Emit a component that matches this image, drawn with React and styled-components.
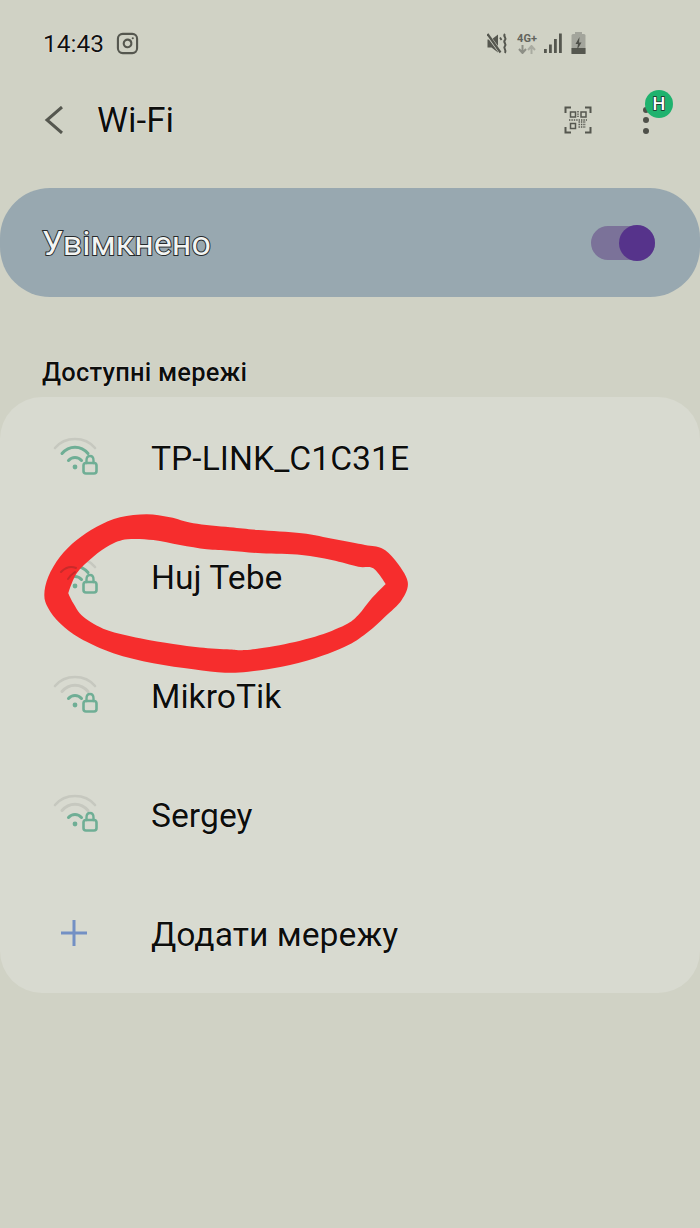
import React from 'react';
import styled, { createGlobalStyle } from 'styled-components';
import { Instagram } from 'lucide-react';

const GlobalStyle = createGlobalStyle`
  html, body {
    margin: 0;
    padding: 0;
    background: #d0d2c5;
    font-family: Roboto, "Noto Sans", sans-serif;
  }
`;

const halo = '0 0 1px rgba(255, 255, 255, 0.9), 0 0 1px rgba(255, 255, 255, 0.7)';

const Screen = styled.div`
  position: relative;
  width: 700px;
  height: 1228px;
  overflow: hidden;
  background: #d0d2c5;
  color: #0d0e0c;
`;

const StatusBar = styled.div`
  display: flex;
  align-items: center;
  justify-content: space-between;
  height: 86px;
  padding: 0 114px 0 43px;
`;

const StatusLeft = styled.div`
  display: flex;
  align-items: center;
  gap: 12px;
  color: #55574f;
`;

const Time = styled.span`
  font-size: 24.5px;
  color: #111;
  text-shadow: ${halo};
`;

const StatusRight = styled.div`
  display: flex;
  align-items: center;
  color: #55574f;
`;

const NetType = styled.div`
  display: flex;
  flex-direction: column;
  align-items: center;
  width: 22px;
  margin: 0 6px 0 8px;
  font-size: 11px;
  line-height: 12px;
  font-weight: 700;
  color: #62645c;
`;

const BatterySlot = styled.span`
  display: flex;
  margin-left: 9px;
`;

const Header = styled.header`
  display: flex;
  align-items: center;
  height: 68px;
  padding: 0 42px 0 44px;
`;

const BackButton = styled.div`
  display: flex;
  width: 53px;
`;

const Title = styled.h1`
  flex: 1;
  margin: 0;
  font-size: 35px;
  font-weight: 400;
  text-shadow: ${halo};
`;

const ToolIcon = styled.div`
  display: flex;
  margin-right: 51px;
`;

const MoreButton = styled.div`
  position: relative;
  display: flex;
  flex-direction: column;
  gap: 4.5px;
  margin-right: 9px;
`;

const Dot = styled.span`
  width: 6px;
  height: 6px;
  border-radius: 50%;
  background: #4e5049;
`;

const Badge = styled.span`
  position: absolute;
  top: -17px;
  left: -1px;
  width: 28px;
  height: 28px;
  margin-left: 3px;
  border-radius: 50%;
  background: #1fb26e;
  color: #fff;
  font-size: 18px;
  font-weight: 500;
  line-height: 28px;
  text-align: center;
  -webkit-text-stroke: 1.5px #1c2a24;
  paint-order: stroke fill;
`;

const ToggleCard = styled.section`
  display: flex;
  align-items: center;
  justify-content: space-between;
  height: 109px;
  margin-top: 34px;
  padding: 0 45px 0 42px;
  border-radius: 50px;
  background: #98a8b0;
`;

const ToggleLabel = styled.span`
  font-size: 34px;
  color: #f3f5f3;
  -webkit-text-stroke: 2px #262a2c;
  paint-order: stroke fill;
`;

const Track = styled.div`
  position: relative;
  width: 64px;
  height: 34px;
  border-radius: 17px;
  background: #7b7299;
`;

const Knob = styled.span`
  position: absolute;
  top: -1px;
  right: 0;
  width: 36px;
  height: 36px;
  border-radius: 50%;
  background: #56338b;
`;

const SectionLabel = styled.h2`
  height: 30px;
  margin: 60px 0 10px;
  padding-left: 42px;
  font-size: 25.5px;
  line-height: 30px;
  font-weight: 500;
  letter-spacing: 0.2px;
  text-shadow: ${halo};
`;

const List = styled.section`
  height: 596px;
  border-radius: 42px;
  background: #d8dad0;
`;

const Row = styled.div`
  display: flex;
  align-items: center;
  height: 119.2px;
`;

const RowIcon = styled.div`
  display: flex;
  width: 151px;
  padding-left: ${(p) => (p.$plus ? '60px' : '52px')};
  box-sizing: border-box;
`;

const RowName = styled.span`
  padding-top: 3px;
  font-size: 33.7px;
  color: #0d0e0c;
  text-shadow: ${halo};
`;

const Scribble = styled.svg`
  position: absolute;
  top: 500px;
  left: 30px;
  pointer-events: none;
`;

const green = '#6fae95';
const grey = '#c6c8bf';

// marker stroke traced from the picture, page coordinates; third value marks a sharp corner
const scribbleOuter = [
  [44.3, 595], [48.3, 576.7], [60, 556.7], [76.7, 540], [96.7, 526.7], [120, 517.3], [146.7, 514.3],
  [170, 517.3], [193.3, 523.3], [230, 527.3], [258.3, 530], [301.7, 533.3], [335, 539.3], [365, 545],
  [381.7, 548.3], [395, 560], [407.7, 581.7], [401.7, 600], [385, 616.7], [368.3, 631.7], [348.3, 645],
  [315, 658.3], [281.7, 666.7], [248.3, 671.7], [225, 672.7], [193.3, 669.3], [153.3, 663.3],
  [113.3, 653.3], [80, 638.3], [60, 623.3], [48.3, 608.3],
];
const scribbleInner = [
  [68.3, 593.3, true], [76.7, 573.3], [93.3, 556.7], [110, 545], [127.3, 539.3], [153.3, 540], [180, 545],
  [206.7, 549.3], [230, 550.7], [261.7, 553.3], [301.7, 555], [331.7, 560], [358.3, 566.7], [373.3, 568.3],
  [385.7, 584, true], [371.7, 598.3], [358.3, 615], [345, 625], [315, 636.7], [275, 646], [245, 650],
  [230, 649.5], [200, 647.5], [173.3, 644], [140, 638.3], [106.7, 630], [83.3, 616.7], [73.3, 603.3],
];

function smoothClosed(points) {
  const n = points.length;
  const tangent = (i) => {
    if (points[i][2]) return [0, 0];
    const prev = points[(i - 1 + n) % n];
    const next = points[(i + 1) % n];
    return [(next[0] - prev[0]) / 6, (next[1] - prev[1]) / 6];
  };
  let d = `M${points[0][0]} ${points[0][1]}`;
  points.forEach((p, i) => {
    const j = (i + 1) % n;
    const next = points[j];
    const t1 = tangent(i);
    const t2 = tangent(j);
    d += ` C${p[0] + t1[0]} ${p[1] + t1[1]} ${next[0] - t2[0]} ${next[1] - t2[1]} ${next[0]} ${next[1]}`;
  });
  return d + ' Z';
}

function WifiLock({ level }) {
  return (
    <svg width="46" height="40" viewBox="0 0 46 40" fill="none" strokeLinecap="round">
      <path d="M3 11 C13 -1 33 -1 43 11" stroke={grey} strokeWidth="2.6" />
      <path d="M10 16.5 C17 8 29 8 36 16.5" stroke={level > 1 ? green : grey} strokeWidth="3" />
      <path d="M16.5 23.5 C20 19.5 26 19.5 29.5 23.5" stroke={green} strokeWidth="3" />
      <circle cx="23" cy="30" r="2.4" fill={green} />
      <path d="M34.5 26 V23.5 C34.5 17.5 41.5 17.5 41.5 23.5 V26" stroke={green} strokeWidth="2.4" />
      <rect x="31.5" y="26" width="13" height="10.5" rx="2.5" stroke={green} strokeWidth="2.6" />
    </svg>
  );
}

function MuteIcon() {
  return (
    <svg width="21" height="21" viewBox="0 0 21 21" fill="none">
      <path d="M0.5 6.5 H4.5 L11 1.5 V19.5 L4.5 14.5 H0.5 Z" fill="currentColor" />
      <path d="M0 1 L14 20" stroke="#d0d2c5" strokeWidth="3.6" />
      <path d="M0.5 1 L13.5 19.5" stroke="currentColor" strokeWidth="2.2" />
      <path d="M13 4.5 L14.5 7" stroke="currentColor" strokeWidth="1.8" />
      <path
        d="M18 1 C15.5 3.5 20 4.5 18 7 C15.5 9.5 20 10.5 18 13 C15.5 15.5 20 16.5 18 20"
        stroke="currentColor"
        strokeWidth="2"
      />
    </svg>
  );
}

function DataArrows() {
  return (
    <svg width="18" height="9" viewBox="0 0 18 9" fill="none">
      <path d="M4.5 0 V7 M1 4 L4.5 8 L8 4" stroke="#8d8f86" strokeWidth="2" />
      <path d="M13.5 9 V2 M10 5 L13.5 1 L17 5" stroke="#a9aba1" strokeWidth="2" />
    </svg>
  );
}

function SignalIcon() {
  return (
    <svg width="18" height="21" viewBox="0 0 18 21" fill="currentColor">
      <rect x="0" y="16" width="2.8" height="4" />
      <rect x="5" y="11.5" width="2.8" height="8.5" />
      <rect x="10" y="6" width="2.8" height="14" />
      <rect x="15" y="0.5" width="2.8" height="19.5" />
    </svg>
  );
}

function BatteryIcon() {
  return (
    <svg width="15" height="22" viewBox="0 0 15 22">
      <rect x="4" y="0" width="7" height="3" fill="#a3a59c" />
      <rect x="0.5" y="2" width="14" height="20" rx="1.5" fill="#a3a59c" />
      <rect x="0.5" y="16" width="14" height="6" fill="#55574f" />
      <path d="M8.5 5 L4.5 12 H7 L6 18 L10.5 10.5 H8 Z" fill="#4e5049" />
    </svg>
  );
}

function QrIcon() {
  return (
    <svg width="28" height="28" viewBox="0 0 28 28" fill="none" stroke="#55574f">
      <path d="M1.5 7 V1.5 H7 M21 1.5 H26.5 V7 M26.5 21 V26.5 H21 M7 26.5 H1.5 V21" strokeWidth="2" />
      <rect x="6.5" y="6" width="5" height="5" strokeWidth="1.5" />
      <rect x="17" y="6" width="5" height="5" strokeWidth="1.5" />
      <rect x="6.5" y="17.5" width="5" height="5" strokeWidth="1.5" />
      <path d="M14 5 V11 M5 14 H23 M14.5 16 H22 M14.5 18.5 H22 M14.5 21 H22" strokeWidth="1.5" strokeDasharray="1.4 1" />
    </svg>
  );
}

const networks = [
  { name: 'TP-LINK_C1C31E', level: 2 },
  { name: 'Huj Tebe', level: 2 },
  { name: 'MikroTik', level: 1 },
  { name: 'Sergey', level: 1 },
];

export default function App() {
  return (
    <Screen>
      <GlobalStyle />
      <StatusBar>
        <StatusLeft>
          <Time>14:43</Time>
          <Instagram size={23} strokeWidth={2.2} />
        </StatusLeft>
        <StatusRight>
          <MuteIcon />
          <NetType>
            4G+
            <DataArrows />
          </NetType>
          <SignalIcon />
          <BatterySlot>
            <BatteryIcon />
          </BatterySlot>
        </StatusRight>
      </StatusBar>

      <Header>
        <BackButton>
          <svg width="20" height="28" viewBox="0 0 20 28" fill="none" stroke="#55574f" strokeWidth="3">
            <path d="M18 1 L3 14 L18 27" />
          </svg>
        </BackButton>
        <Title>Wi-Fi</Title>
        <ToolIcon>
          <QrIcon />
        </ToolIcon>
        <MoreButton>
          <Dot />
          <Dot />
          <Dot />
          <Badge>H</Badge>
        </MoreButton>
      </Header>

      <ToggleCard>
        <ToggleLabel>Увімкнено</ToggleLabel>
        <Track>
          <Knob />
        </Track>
      </ToggleCard>

      <SectionLabel>Доступні мережі</SectionLabel>

      <List>
        {networks.map((n) => (
          <Row key={n.name}>
            <RowIcon>
              <WifiLock level={n.level} />
            </RowIcon>
            <RowName>{n.name}</RowName>
          </Row>
        ))}
        <Row>
          <RowIcon $plus>
            <svg width="28" height="28" viewBox="0 0 28 28" stroke="#7390c4" strokeWidth="3">
              <path d="M14 1 V27 M1 14 H27" />
            </svg>
          </RowIcon>
          <RowName>Додати мережу</RowName>
        </Row>
      </List>

      <Scribble width="400" height="190" viewBox="30 500 400 190" fill="none">
        <path
          d={`${smoothClosed(scribbleOuter)} ${smoothClosed(scribbleInner)}`}
          fill="#f62d2d"
          fillRule="evenodd"
        />
        {/* the wifi arcs still show through the marker */}
        <path d="M61 572 C66 567 71 566 76 568" stroke="#c92a2a" strokeWidth="2" strokeLinecap="round" />
        <path d="M68 579 C70 576 72 574 75 572" stroke="#c92a2a" strokeWidth="2" strokeLinecap="round" />
      </Scribble>
    </Screen>
  );
}
